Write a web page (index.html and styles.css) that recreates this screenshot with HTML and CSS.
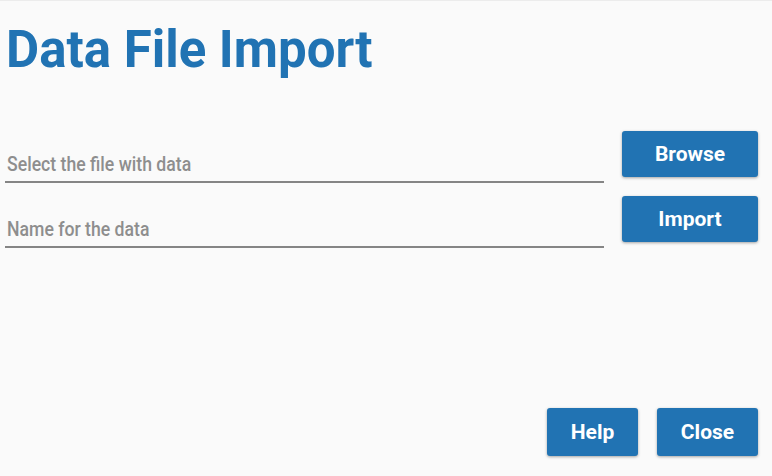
FILE: index.html
```html
<!DOCTYPE html>
<html>
<head>
<meta charset="utf-8">
<link rel="stylesheet" href="styles.css">
</head>
<body>
<div class="page">
  <h1 class="title">Data File Import</h1>
  <div class="form">
    <div class="field"><span class="placeholder">Select the file with data</span></div>
    <button class="btn btn-side">Browse</button>
    <div class="field"><span class="placeholder">Name for the data</span></div>
    <button class="btn btn-side">Import</button>
  </div>
  <div class="spacer"></div>
  <div class="footer">
    <button class="btn btn-help">Help</button>
    <button class="btn btn-close">Close</button>
  </div>
</div>
</body>
</html>
```
FILE: styles.css
```css
html, body {
  margin: 0;
  padding: 0;
  height: 100%;
}
body {
  background: #fafafa;
  font-family: Roboto, "Liberation Sans", sans-serif;
  border-top: 1px solid #ececec;
  box-sizing: border-box;
}
.page {
  height: 100%;
  display: flex;
  flex-direction: column;
  padding: 0 14px 20px 5px;
  box-sizing: border-box;
}
.title {
  margin: 19px 0 0 1px;
  font-size: 51px;
  line-height: 60px;
  font-weight: 700;
  color: #2173b3;
}
.form {
  margin-top: 51px;
  display: grid;
  grid-template-columns: 1fr 136px;
  column-gap: 18px;
  row-gap: 19px;
  align-items: end;
}
.field {
  border-bottom: 2px solid #858585;
  height: 44px;
  display: flex;
  align-items: flex-end;
  padding: 0 0 6px 2px;
  box-sizing: border-box;
  margin-bottom: -6px;
}
.placeholder {
  display: inline-block;
  font-size: 21px;
  font-weight: 500;
  color: #8e8e8e;
  line-height: 22px;
  white-space: nowrap;
  transform: scaleX(0.84);
  transform-origin: left center;
}
.btn {
  border: none;
  background: #2173b3;
  color: #fff;
  font-family: Roboto, "Liberation Sans", sans-serif;
  font-weight: 700;
  font-size: 21px;
  border-radius: 3px;
  box-shadow: 0 1px 3px rgba(0,0,0,0.35);
  padding: 0;
  cursor: pointer;
}
.btn-side {
  height: 46px;
  width: 136px;
}
.spacer {
  flex: 1;
}
.footer {
  display: flex;
  justify-content: flex-end;
  gap: 19px;
}
.btn-help {
  width: 91px;
  height: 48px;
}
.btn-close {
  width: 101px;
  height: 48px;
}
```
